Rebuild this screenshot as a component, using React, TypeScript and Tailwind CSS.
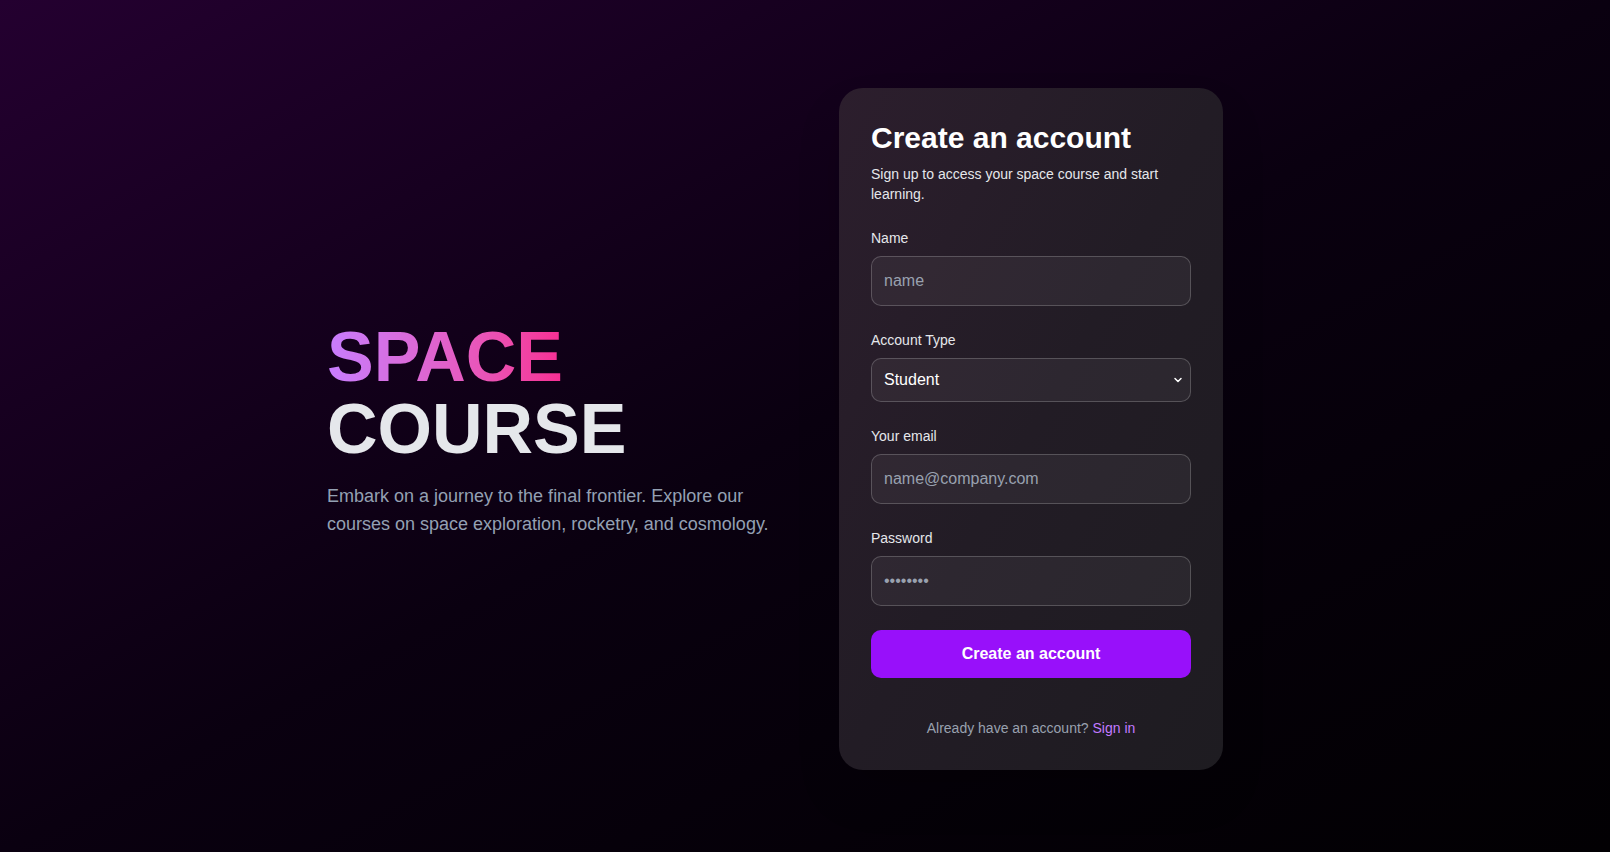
import React from 'react'
import {ChevronDown} from 'lucide-react'

const font = "font-['Liberation_Sans',Arial,sans-serif]"

function Field({label, children}: {label: string; children: React.ReactNode}) {
    return (
        <div className="mb-6">
            <label className="block mb-2 text-sm leading-5 text-gray-200">{label}</label>
            {children}
        </div>
    )
}

const inputCls =
    'w-full h-[50px] rounded-[10px] border border-white/20 bg-white/5 px-3 text-base text-white placeholder:text-gray-400 outline-none'

export default function App() {
    return (
        <div
            className={`min-h-screen w-full flex items-center pt-[6px] bg-gradient-to-br from-[#240030] via-[#0a0010] to-[#020003] ${font}`}>
            <div className="w-[956px] mx-auto flex items-center gap-16">
                <div className="w-[448px] shrink-0">
                    <h1 className="text-[70px] leading-[72px] font-bold mb-[17px]">
                        <span className="bg-gradient-to-r from-[#c77dff] to-[#f72d93] bg-clip-text text-transparent">SPACE</span>
                        <br/>
                        <span className="text-gray-200">COURSE</span>
                    </h1>
                    <p className="text-lg leading-7 text-[#94a0b3]">
                        Embark on a journey to the final frontier. Explore our courses on space exploration, rocketry,
                        and cosmology.
                    </p>
                </div>

                <div
                    className="w-96 shrink-0 rounded-3xl p-8 bg-gradient-to-br from-[#2c1e2d] via-[#221c25] to-[#1e1c21] shadow-2xl">
                    <h2 className="text-3xl leading-9 font-bold text-white">Create an account</h2>
                    <p className="mt-2 mb-6 text-sm leading-5 text-gray-200">
                        Sign up to access your space course and start learning.
                    </p>

                    <Field label="Name">
                        <input type="text" placeholder="name" className={inputCls}/>
                    </Field>

                    <Field label="Account Type">
                        <div className="relative">
                            <select
                                defaultValue="Student"
                                className="w-full h-[44px] appearance-none rounded-[10px] border border-white/20 bg-white/5 px-3 text-base text-white outline-none">
                                <option className="bg-[#222]">Student</option>
                                <option className="bg-[#222]">Instructor</option>
                            </select>
                            <ChevronDown size={12} strokeWidth={3}
                                         className="absolute right-[7px] top-1/2 -translate-y-1/2 text-white pointer-events-none"/>
                        </div>
                    </Field>

                    <Field label="Your email">
                        <input type="email" placeholder="name@company.com" className={inputCls}/>
                    </Field>

                    <Field label="Password">
                        <input type="password" placeholder="••••••••" className={inputCls}/>
                    </Field>

                    <button
                        className="w-full h-12 rounded-[10px] bg-[#9810fa] text-base font-bold text-white">
                        Create an account
                    </button>

                    <p className="mt-10 text-center text-sm leading-5 text-gray-400">
                        Already have an account? <a href="#" className="text-[#c27aff]">Sign in</a>
                    </p>
                </div>
            </div>
        </div>
    )
}
